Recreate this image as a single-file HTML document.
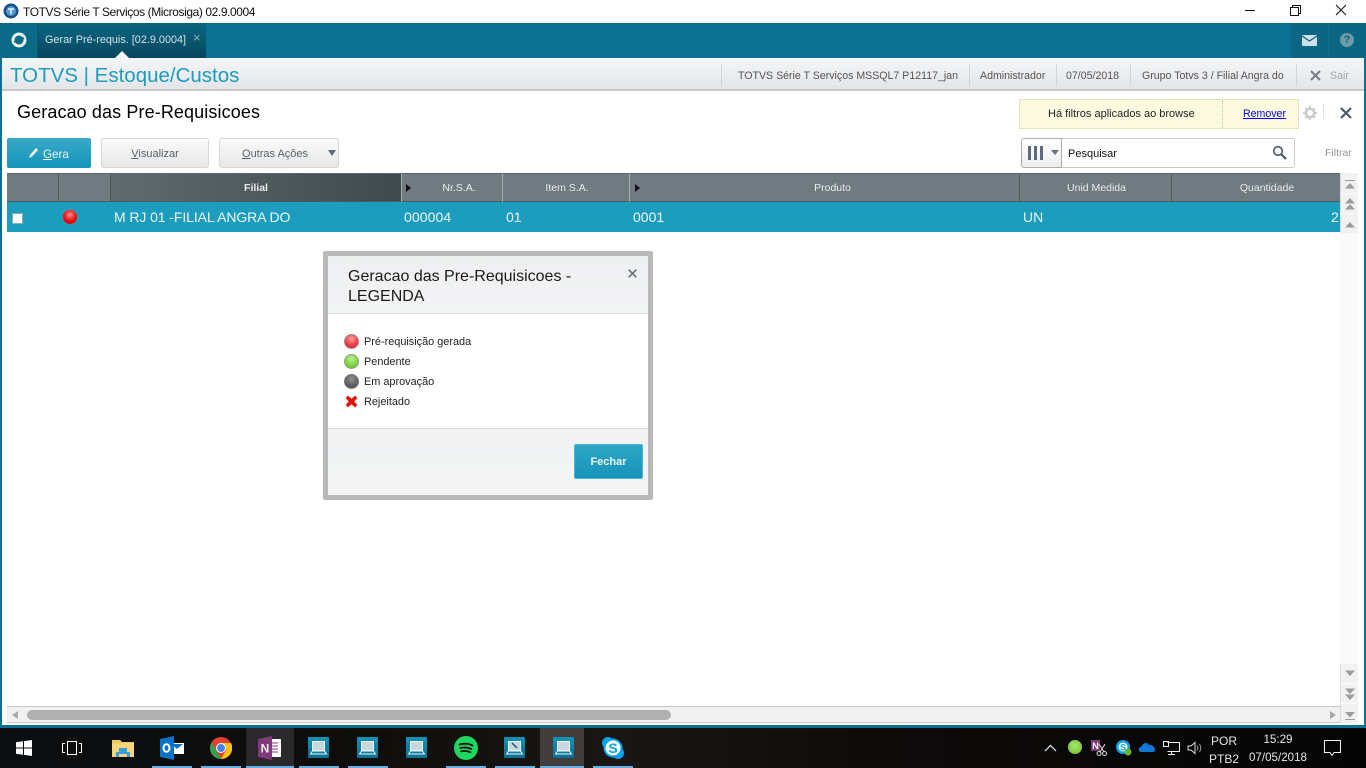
<!DOCTYPE html>
<html lang="pt"><head><meta charset="utf-8"><title>TOTVS</title>
<style>
html,body{margin:0;padding:0;width:1366px;height:768px;overflow:hidden;background:#fff;font-family:"Liberation Sans",sans-serif;color:#000}
.a{position:absolute;white-space:nowrap}
.sep{position:absolute;width:1px;background:#d3d6d9;top:64px;height:22px}
.mb{position:absolute;top:69px;font-size:10.6px;line-height:14px;color:#555;white-space:nowrap}
.hd{position:absolute;top:173px;height:27px;background:#6f7b80;border-right:1px solid #4f5a5e;border-top:1px solid #5d686c;border-bottom:2px solid #4f5a5e;color:#e8ecee;font-size:10.5px;text-align:center;line-height:29px}
.hl{border-right-color:#a3abae}
.cell{position:absolute;top:202px;height:30px;line-height:30px;color:#eef6f9;font-size:14px;white-space:nowrap}
.btn{position:absolute;top:138px;height:28px;border:1px solid #d5d7d9;border-radius:3px;background:linear-gradient(#fafafa,#e6e7e8);color:#5a6266;font-size:11px;line-height:31px;text-align:center}
.sb{position:absolute;left:1340px;width:18px;background:#f1f1f1;border-left:1px solid #ddd;box-sizing:border-box}
.ball{position:absolute;border-radius:50%}
.lg{position:absolute;left:364px;font-size:10.9px;color:#222;white-space:nowrap;height:14px;line-height:16px}
.pin{position:absolute;top:766px;width:40px;height:2px;background:#67aee2}
</style></head><body>

<!-- title bar -->
<svg class="a" style="left:3px;top:3px" width="16" height="16" viewBox="0 0 16 16"><circle cx="8" cy="8" r="7.500" fill="#1a4f86"/><circle cx="8" cy="8" r="5" fill="#4f9bd6"/><path d="M5 6h6M8 6v5" stroke="#e8f3fb" stroke-width="1.600" fill="none"/></svg>
<div class="a" style="left:23px;top:4px;font-size:12px;line-height:16px;color:#111;letter-spacing:-.41px">TOTVS Série T Serviços (Microsiga) 02.9.0004</div>
<svg class="a" style="left:1240px;top:0" width="126" height="23" viewBox="0 0 126 23"><path d="M5 10.500h10" stroke="#111" fill="none"/><path d="M50.500 7.500h8v8h-8zM52.500 7.500v-2h8v8h-2" stroke="#111" fill="none"/><path d="M96 5l10 10M106 5l-10 10" stroke="#111" fill="none"/></svg>

<!-- side borders -->
<div class="a" style="left:0;top:23px;width:2px;height:703px;background:#0b7190"></div>
<div class="a" style="left:1364px;top:23px;width:2px;height:703px;background:#0b7190"></div>
<div class="a" style="left:0;top:725px;width:1366px;height:3px;background:#0b7190"></div>

<!-- teal bar -->
<div class="a" style="left:0;top:23px;width:1366px;height:35px;background:#0b7190"></div>
<div class="a" style="left:0;top:23px;width:38px;height:35px;background:#0a6a87;border-right:1px solid #095a74;box-sizing:border-box"></div>
<svg class="a" style="left:10px;top:31px" width="18" height="18" viewBox="0 0 18 18"><circle cx="9" cy="9" r="6" fill="none" stroke="#e8f2f5" stroke-width="3"/><path d="M4 11L14 7" stroke="#0a6a87" stroke-width="1.800"/></svg>
<div class="a" style="left:38px;top:23px;width:168px;height:35px;background:linear-gradient(#0a6682,#06475d)"></div>
<div class="a" style="left:45px;top:33px;font-size:10.85px;line-height:14px;color:#d5e2e7">Gerar Pré-requis. [02.9.0004]</div>
<div class="a" style="left:193px;top:31px;font-size:13px;line-height:14px;color:#8fb2be">×</div>
<div class="a" style="left:115px;top:51px;width:0;height:0;border-left:7px solid transparent;border-right:7px solid transparent;border-bottom:7px solid #f3f4f5"></div>
<div class="a" style="left:1291px;top:23px;width:37px;height:35px;background:#0a6682"></div>
<div class="a" style="left:1329px;top:23px;width:37px;height:35px;background:#0a6682"></div>
<svg class="a" style="left:1302px;top:35px" width="15" height="11" viewBox="0 0 15 11"><rect width="15" height="11" rx="1" fill="#cfe0e6"/><path d="M0 1l7.500 5L15 1" stroke="#0a6682" stroke-width="1.200" fill="none"/></svg>
<div class="a" style="left:1340px;top:33px;width:14px;height:14px;border-radius:50%;background:#6f9aa9;color:#0a6682;font:bold 11px/14px 'Liberation Sans',sans-serif;text-align:center">?</div>

<!-- module bar -->
<div class="a" style="left:2px;top:58px;width:1362px;height:31px;background:linear-gradient(#f4f5f6,#e3e6e9);border-bottom:2px solid #c6cacd"></div>
<div class="a" style="left:10px;top:63px;font-size:20.5px;line-height:26px;color:#1f9bbd">TOTVS | Estoque/Custos</div>
<div class="sep" style="left:721px"></div>
<div class="mb" style="left:738px">TOTVS Série T Serviços MSSQL7 P12117_jan</div>
<div class="sep" style="left:969px"></div>
<div class="mb" style="left:980px">Administrador</div>
<div class="sep" style="left:1056px"></div>
<div class="mb" style="left:1066px">07/05/2018</div>
<div class="sep" style="left:1130px"></div>
<div class="mb" style="left:1142px">Grupo Totvs 3 / Filial Angra do</div>
<div class="sep" style="left:1296px"></div>
<svg class="a" style="left:1310px;top:70px" width="11" height="11" viewBox="0 0 11 11"><path d="M1 1l9 9M10 1l-9 9" stroke="#777f84" stroke-width="2"/></svg>
<div class="mb" style="left:1330px;color:#a3a8ab">Sair</div>

<!-- page header -->
<div class="a" style="left:17px;top:101px;font-size:18px;line-height:22px;color:#000;letter-spacing:.11px">Geracao das Pre-Requisicoes</div>
<div class="a" style="left:1019px;top:99px;width:280px;height:30px;box-sizing:border-box;background:#fdfbdf;border:1px solid #e6e4b8"></div>
<div class="a" style="left:1222px;top:100px;height:28px;border-left:1px dotted #bbb"></div>
<div class="a" style="left:1048px;top:107px;font-size:11px;line-height:14px;color:#222">Há filtros aplicados ao browse</div>
<div class="a" style="left:1243px;top:107px;font-size:10.6px;line-height:14px;color:#0000ee;text-decoration:underline">Remover</div>
<svg class="a" style="left:1303px;top:106px" width="14" height="14" viewBox="0 0 14 14"><circle cx="7" cy="7" r="4.200" fill="none" stroke="#c9cbcc" stroke-width="2.400"/><path d="M7 0v3M7 11v3M0 7h3M11 7h3M2 2l2 2M10 10l2 2M12 2l-2 2M4 10l-2 2" stroke="#c9cbcc" stroke-width="1.800"/></svg>
<div class="a" style="left:1323px;top:104px;height:16px;border-left:1px dotted #ccc"></div>
<svg class="a" style="left:1340px;top:107px" width="12" height="12" viewBox="0 0 12 12"><path d="M1 1l10 10M11 1L1 11" stroke="#4b5a66" stroke-width="2.200"/></svg>

<!-- buttons -->
<div class="a" style="left:7px;top:138px;width:84px;height:30px;border-radius:2px;background:linear-gradient(#38a9c8,#1595ba)"></div>
<svg class="a" style="left:28px;top:147px" width="12" height="12" viewBox="0 0 12 12"><path d="M1 11l1-3 6-7 2 2-6 6.500z" fill="#f4fafc"/></svg>
<div class="a" style="left:43px;top:147px;font-size:11.6px;line-height:15px;color:#e9f6fa"><u>G</u>era</div>
<div class="btn" style="left:101px;width:106px"><u>V</u>isualizar</div>
<div class="btn" style="left:219px;width:118px;text-align:left"><span style="margin-left:22px"><u>O</u>utras Ações</span></div>
<div class="a" style="left:328px;top:150px;width:0;height:0;border-left:4px solid transparent;border-right:4px solid transparent;border-top:6px solid #5f6b75"></div>

<!-- search -->
<div class="a" style="left:1021px;top:138px;width:274px;height:30px;box-sizing:border-box;background:#fff;border:1px solid #c9ccce;border-radius:3px"></div>
<div class="a" style="left:1021px;top:138px;width:41px;height:30px;box-sizing:border-box;background:linear-gradient(#fff,#eceded);border:1px solid #a9adb0;border-radius:3px 0 0 3px"></div>
<div class="a" style="left:1028px;top:146px;width:3px;height:14px;background:#5f6b7a"></div>
<div class="a" style="left:1034px;top:146px;width:3px;height:14px;background:#5f6b7a"></div>
<div class="a" style="left:1040px;top:146px;width:3px;height:14px;background:#5f6b7a"></div>
<div class="a" style="left:1051px;top:150px;width:0;height:0;border-left:4px solid transparent;border-right:4px solid transparent;border-top:5px solid #6a7480"></div>
<div class="a" style="left:1068px;top:147px;font-size:11px;line-height:15px;color:#111">Pesquisar</div>
<svg class="a" style="left:1272px;top:145px" width="15" height="15" viewBox="0 0 15 15"><circle cx="6" cy="6" r="4.300" fill="none" stroke="#4c5560" stroke-width="1.600"/><path d="M9.500 9.500l4.500 4.500" stroke="#4c5560" stroke-width="2.200"/></svg>
<div class="a" style="left:1325px;top:146px;font-size:10.5px;line-height:15px;color:#8d9498">Filtrar</div>

<!-- table header -->
<div class="hd" style="left:7px;width:51px"></div>
<div class="hd" style="left:59px;width:51px"></div>
<div class="hd hl" style="left:111px;width:290px;background:linear-gradient(90deg,#5f6b6e,#3f4a4c);font-weight:bold;border-right-color:#a3abae">Filial</div>
<div class="hd hl" style="left:402px;width:100px"><span style="margin-left:14px">Nr.S.A.</span></div>
<div class="hd hl" style="left:503px;width:126px"><span style="margin-left:2px">Item S.A.</span></div>
<div class="hd" style="left:630px;width:389px"><span style="margin-left:16px">Produto</span></div>
<div class="hd" style="left:1020px;width:151px"><span style="margin-left:2px">Unid Medida</span></div>
<div class="hd" style="left:1172px;width:168px;border-right:0"><span style="margin-left:22px">Quantidade</span></div>
<div class="a" style="left:406px;top:184px;width:0;height:0;border-top:4px solid transparent;border-bottom:4px solid transparent;border-left:5px solid #111"></div>
<div class="a" style="left:635px;top:184px;width:0;height:0;border-top:4px solid transparent;border-bottom:4px solid transparent;border-left:5px solid #111"></div>

<!-- row -->
<div class="a" style="left:7px;top:202px;width:1333px;height:30px;background:#1d9dbe"></div>
<div class="a" style="left:12px;top:213px;width:9px;height:9px;background:#fff;border:1px solid #8aa"></div>
<div class="ball" style="left:63px;top:210px;width:14px;height:14px;background:radial-gradient(circle at 50% 35%,#ff8a8a,#e8090d 55%,#b10a10);box-shadow:0 0 0 .5px #8c8c8c"></div>
<div class="cell" style="left:114px;letter-spacing:-.09px">M RJ 01 -FILIAL ANGRA DO</div>
<div class="cell" style="left:404px;letter-spacing:.1px">000004</div>
<div class="cell" style="left:506px">01</div>
<div class="cell" style="left:633px">0001</div>
<div class="cell" style="left:1023px">UN</div>
<div class="cell" style="left:1331px">2</div>

<!-- vertical scrollbar -->
<div class="a" style="left:1340px;top:173px;width:18px;height:534px;background:#fafafa"></div>
<div class="sb" style="top:173px;height:20px"></div>
<div class="sb" style="top:194px;height:19px"></div>
<div class="sb" style="top:214px;height:19px"></div>
<div class="sb" style="top:664px;height:19px"></div>
<div class="sb" style="top:684px;height:19px"></div>
<div class="sb" style="top:704px;height:19px"></div>
<svg class="a" style="left:1340px;top:173px" width="20" height="60" viewBox="0 0 20 60" fill="#9a9d9f"><path d="M5 7h10v1H5z"/><path d="M10 10l5 5.500H5z"/><path d="M10 25l5 5.500H5zM10 31l5 5.500H5z"/><path d="M10 49l5 5.500H5z"/></svg>
<svg class="a" style="left:1340px;top:664px" width="20" height="60" viewBox="0 0 20 60" fill="#9a9d9f"><path d="M5 6.500h10l-5 5.500z"/><path d="M5 24.500h10l-5 5.500zM5 30.500h10l-5 5.500z"/><path d="M5 48h10l-5 5.500z"/><path d="M5 55h10v1H5z"/></svg>

<!-- horizontal scrollbar -->
<div class="a" style="left:7px;top:706px;width:1333px;height:17px;box-sizing:border-box;background:#f1f1f1;border-top:1px solid #c8c8c8;border-bottom:1px solid #c8c8c8"></div>
<div class="a" style="left:27px;top:710px;width:644px;height:10px;border-radius:5px;background:#b0b0b0"></div>
<div class="a" style="left:12px;top:711px;width:0;height:0;border-top:4.500px solid transparent;border-bottom:4.500px solid transparent;border-right:6px solid #a8a8a8"></div>
<div class="a" style="left:1330px;top:711px;width:0;height:0;border-top:4.500px solid transparent;border-bottom:4.500px solid transparent;border-left:6px solid #a8a8a8"></div>

<!-- dialog -->
<div class="a" style="left:323px;top:251px;width:330px;height:249px;box-sizing:border-box;border:5px solid #b9b9b9;background:#fff;border-radius:2px"></div>
<div class="a" style="left:328px;top:256px;width:320px;height:58px;box-sizing:border-box;background:linear-gradient(#eeeff0,#f3f4f5);border-bottom:1px solid #dadcde"></div>
<div class="a" style="left:328px;top:428px;width:320px;height:67px;box-sizing:border-box;background:linear-gradient(#f1f2f3,#f4f5f5);border-top:1px solid #dadcde"></div>
<div class="a" style="left:348px;top:267px;font-size:16px;line-height:20px;color:#1a1a1a">Geracao das Pre-Requisicoes -<br>LEGENDA</div>
<svg class="a" style="left:628px;top:269px" width="9" height="9" viewBox="0 0 9 9"><path d="M.7.7l7.600 7.600M8.300.7L.7 8.300" stroke="#6c7478" stroke-width="1.700"/></svg>
<div class="ball" style="left:344px;top:334px;width:15px;height:15px;box-sizing:border-box;border:1px solid #9a8a8a;background:radial-gradient(circle at 50% 30%,#ff9d9d,#ed3a3f 60%,#c9262b)"></div>
<div class="ball" style="left:344px;top:354px;width:15px;height:15px;box-sizing:border-box;border:1px solid #8ca08c;background:radial-gradient(circle at 50% 30%,#b8f08e,#7ed23f 60%,#5cb32a)"></div>
<div class="ball" style="left:344px;top:374px;width:15px;height:15px;box-sizing:border-box;border:1px solid #777;background:radial-gradient(circle at 50% 30%,#8f8f8f,#5f5f5f 60%,#4a4a4a)"></div>
<svg class="a" style="left:345px;top:395px" width="13" height="13" viewBox="0 0 13 13"><path d="M1.500 3L3 1.500l3.500 3 3.500-3L11.500 3l-3 3.500 3 3.500-1.500 1.500-3.500-3-3.500 3L1.500 10l3-3.500z" fill="#e31212" stroke="#e31212" stroke-width="1.200"/></svg>
<div class="lg" style="top:334px">Pré-requisição gerada</div>
<div class="lg" style="top:354px">Pendente</div>
<div class="lg" style="top:374px">Em aprovação</div>
<div class="lg" style="top:394px">Rejeitado</div>
<div class="a" style="left:574px;top:444px;width:69px;height:35px;box-sizing:border-box;border:1px solid #4bb7d3;border-radius:2px;background:linear-gradient(#2fa6c6,#1694b9);color:#eaf6fa;font:bold 11px/35px 'Liberation Sans',sans-serif;text-align:center">Fechar</div>

<!-- taskbar -->
<div class="a" style="left:0;top:728px;width:1366px;height:40px;background:linear-gradient(90deg,#0b0e11,#0e0d0c 25%,#1a1613 45%,#0d0b0a 65%,#050505)"></div>
<div class="a" style="left:246px;top:728px;width:48px;height:40px;background:#2a282a"></div>
<div class="a" style="left:540px;top:728px;width:44px;height:40px;background:#423d3a"></div>
<svg class="a" style="left:16px;top:740px" width="16" height="16" viewBox="0 0 16 16" fill="#fff"><path d="M0 2.300l7-1v6.200H0zM8 1.100L16 0v7.500H8zM0 8.500h7v6.200l-7-1zM8 8.500h8V16l-8-1.100z"/></svg>
<svg class="a" style="left:62px;top:741px" width="20" height="14" viewBox="0 0 20 14" fill="none" stroke="#fff"><rect x="5.500" y=".5" width="9" height="13"/><path d="M3 2.500H.5v9H3M17 2.500h2.500v9H17"/></svg>
<svg class="a" style="left:112px;top:739px" width="22" height="18" viewBox="0 0 22 18"><path d="M0 1h8l2 2h12v15H0z" fill="#f0c75e"/><rect y="4" width="22" height="14" fill="#f5d67c"/><path d="M4 18v-5h3V9h8v4h3v5h-3v-3H7v3z" fill="#3aa0da"/></svg>
<svg class="a" style="left:160px;top:736px" width="24" height="24" viewBox="0 0 24 24"><path d="M10 7h14v11H10z" fill="#fff"/><path d="M11 8h12l-6 5z" fill="#0a72c6"/><path d="M0 3l14-3v24L0 21z" fill="#0a72c6"/><ellipse cx="6.500" cy="12" rx="3" ry="3.800" fill="none" stroke="#fff" stroke-width="2"/></svg>
<svg class="a" style="left:210px;top:737px" width="22" height="22" viewBox="0 0 22 22"><circle cx="11" cy="11" r="11" fill="#e44134"/><path d="M11 22A11 11 0 0 1 1.500 5.500L6.500 14l4.500 8z" fill="#2fa24b"/><path d="M11 22l5.500-9.500L11 6h10a11 11 0 0 1-10 16z" fill="#fbc116"/><circle cx="11" cy="11" r="5" fill="#fff"/><circle cx="11" cy="11" r="4" fill="#4b83ec"/></svg>
<svg class="a" style="left:258px;top:736px" width="24" height="24" viewBox="0 0 24 24"><rect x="12" y="3" width="11" height="18" fill="#fff"/><path d="M14 7h6M14 10h6M14 13h6M14 16h6" stroke="#80397b"/><path d="M0 3l14-3v24L0 21z" fill="#80397b"/><text x="7" y="16.500" font-family="Liberation Sans" font-size="12" font-weight="bold" fill="#eee" text-anchor="middle">N</text></svg>
<svg width="0" height="0" style="position:absolute"><defs><linearGradient id="lg1" x1="0" y1="0" x2="0" y2="1"><stop offset="0" stop-color="#1392b5"/><stop offset="1" stop-color="#0b6f90"/></linearGradient><g id="lap"><rect width="21" height="21" rx="1" fill="url(#lg1)"/><rect x="4.500" y="4.500" width="12" height="9" fill="#c9d8df" stroke="#eef5f8"/><path d="M2.500 17l2-3h12l2 3z" fill="#0e7ea1" stroke="#eef5f8"/></g></defs></svg>
<svg class="a" style="left:308px;top:737px" width="21" height="21"><use href="#lap"/></svg>
<svg class="a" style="left:357px;top:737px" width="21" height="21"><use href="#lap"/></svg>
<svg class="a" style="left:406px;top:737px" width="21" height="21"><use href="#lap"/></svg>
<svg class="a" style="left:454px;top:736px" width="24" height="24" viewBox="0 0 24 24"><circle cx="12" cy="12" r="12" fill="#1ed760"/><path d="M5.500 8.500c4.500-1.300 9-1 13 1M6.300 12c4-1 7.500-.8 11 1M7 15.300c3.300-.8 6.300-.6 9.300.9" stroke="#111" stroke-width="1.800" fill="none" stroke-linecap="round"/></svg>
<svg class="a" style="left:504px;top:737px" width="21" height="21" viewBox="0 0 21 21"><use href="#lap"/><path d="M8 6l5 5" stroke="#0e5d7a" stroke-width="1.500"/></svg>
<svg class="a" style="left:553px;top:737px" width="21" height="21"><use href="#lap"/></svg>
<svg class="a" style="left:601px;top:736px" width="24" height="24" viewBox="0 0 24 24"><circle cx="7" cy="7" r="6" fill="#08a3ea"/><circle cx="17" cy="17" r="6" fill="#08a3ea"/><circle cx="12" cy="12" r="9.500" fill="#08a3ea"/><circle cx="12" cy="12" r="7.500" fill="#fff"/><text x="12" y="17" font-family="Liberation Sans" font-size="14" font-weight="bold" fill="#08a3ea" text-anchor="middle">S</text></svg>
<div class="pin" style="left:152px"></div><div class="pin" style="left:201px"></div><div class="pin" style="left:246px;width:48px"></div><div class="pin" style="left:299px"></div><div class="pin" style="left:348px"></div><div class="pin" style="left:446px"></div><div class="pin" style="left:495px"></div><div class="pin" style="left:540px;width:44px"></div><div class="pin" style="left:593px"></div>

<!-- tray -->
<svg class="a" style="left:1044px;top:744px" width="13" height="8" viewBox="0 0 13 8"><path d="M1 7l5.500-5.500L12 7" stroke="#eee" fill="none" stroke-width="1.200"/></svg>
<div class="ball" style="left:1068px;top:740px;width:14px;height:14px;background:radial-gradient(circle at 50% 40%,#a6e66d,#6cbf2e)"></div>
<svg class="a" style="left:1091px;top:740px" width="16" height="16" viewBox="0 0 16 16"><rect width="9" height="11" fill="#80397b"/><text x="4.500" y="9" font-family="Liberation Sans" font-size="9" font-weight="bold" fill="#fff" text-anchor="middle">N</text><circle cx="8" cy="13.500" r="2" fill="none" stroke="#ddd"/><circle cx="13.500" cy="13.500" r="2" fill="none" stroke="#ddd"/><path d="M9 12l5-8M13 12L8 4" stroke="#ddd"/></svg>
<svg class="a" style="left:1116px;top:740px" width="16" height="16" viewBox="0 0 16 16"><circle cx="7" cy="7" r="7" fill="#08a3ea"/><circle cx="7" cy="7" r="4.500" fill="#fff"/><text x="7" y="10.500" font-family="Liberation Sans" font-size="9" font-weight="bold" fill="#08a3ea" text-anchor="middle">S</text><circle cx="12" cy="12" r="3.500" fill="#6cb82c"/></svg>
<svg class="a" style="left:1139px;top:742px" width="16" height="10" viewBox="0 0 16 10"><path d="M2 10a2.500 2.500 0 0 1 0-5c1-3.500 6-6 8-2 3-.5 6 2 6 4.500 0 1.500-1 2.500-2 2.500z" fill="#0f78d4"/></svg>
<svg class="a" style="left:1163px;top:741px" width="17" height="15" viewBox="0 0 17 15" fill="none" stroke="#eee"><path d="M4.500 1.500h12v9h-12M8.500 10.500v3M5 13.500h7"/><rect x=".5" y=".5" width="5" height="5"/></svg>
<svg class="a" style="left:1187px;top:741px" width="16" height="14" viewBox="0 0 16 14" fill="none" stroke="#ddd"><path d="M1 5h3l4-3.500v11L4 9H1z"/><path d="M10 4.500c1 1.500 1 3.500 0 5M12.500 3c1.500 2.500 1.500 5.500 0 8" stroke="#999"/></svg>
<div class="a" style="left:1205px;top:732px;width:38px;font-size:12px;line-height:18px;color:#e6e6e6;text-align:center">POR<br>PTB2</div>
<div class="a" style="left:1245px;top:731px;width:66px;font-size:11.6px;line-height:18px;color:#e6e6e6;text-align:center">15:29<br>07/05/2018</div>
<svg class="a" style="left:1324px;top:740px" width="18" height="17" viewBox="0 0 18 17" fill="none" stroke="#f0f0f0"><path d="M.5 .5h16v12H10l-2 3-2-3H.5z"/></svg>
</body></html>
